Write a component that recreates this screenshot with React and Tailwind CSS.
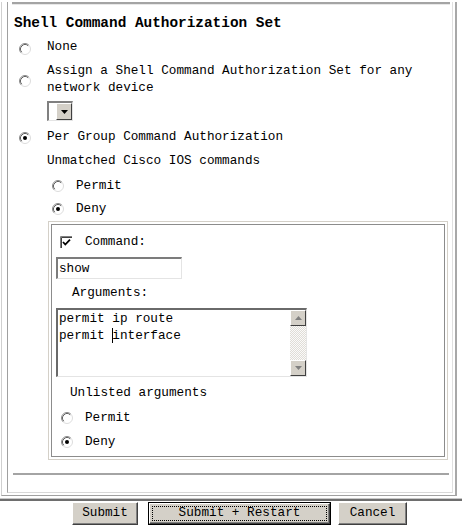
import React from 'react'

const mono = { fontFamily: '"Liberation Mono", "DejaVu Sans Mono", monospace' }

function Radio({ checked }) {
  return (
    <svg width="12" height="12" viewBox="0 0 12 12" className="shrink-0">
      <circle cx="6" cy="6" r="5" fill="#fff" />
      <path d="M2.11 9.89 A5.5 5.5 0 0 1 9.89 2.11" stroke="#8c8c8c" fill="none" />
      <path d="M9.89 2.11 A5.5 5.5 0 0 1 2.11 9.89" stroke="#dcdcdc" fill="none" />
      <path d="M2.82 9.18 A4.5 4.5 0 0 1 9.18 2.82" stroke="#505050" fill="none" strokeWidth="0.9" />
      {checked && <circle cx="6" cy="6" r="2" fill="#000" />}
    </svg>
  )
}

function Checkbox() {
  return (
    <svg width="13" height="13" viewBox="0 0 13 13" className="shrink-0">
      <rect x="0" y="0" width="13" height="13" fill="#fff" />
      <path d="M0.5 13 V0.5 H13" stroke="#808080" fill="none" />
      <path d="M1.5 12 V1.5 H12" stroke="#404040" fill="none" />
      <path d="M12.5 0 V12.5 H0" stroke="#fff" fill="none" />
      <path d="M3 6 L5.3 8.5 L10 3.6" stroke="#000" strokeWidth="1.8" fill="none" />
    </svg>
  )
}

function Row({ h, mt, children, className = '' }) {
  return (
    <div className={`flex items-center ${className}`} style={{ height: h, marginTop: mt }}>
      {children}
    </div>
  )
}

function Button({ children, width, primary }) {
  if (primary) {
    return (
      <div className="h-[23px] border border-black bg-[#d4d0c8] flex" style={{ width }}>
        <div className="flex-1 border-t border-l border-white border-r border-b border-r-[#404040] border-b-[#404040] shadow-[inset_-1px_-1px_#808080] p-[2px] flex">
          <div className="flex-1 border border-dotted border-black flex items-center justify-center text-[12.7px] leading-none">
            {children}
          </div>
        </div>
      </div>
    )
  }
  return (
    <div
      className="h-[23px] bg-[#d4d0c8] border-t border-l border-white border-r border-b border-r-[#404040] border-b-[#404040] shadow-[inset_-1px_-1px_#808080] flex items-center justify-center text-[12.7px] leading-none"
      style={{ width }}
    >
      {children}
    </div>
  )
}

export default function App() {
  return (
    <div className="w-[462px] h-[526px] bg-white text-black overflow-hidden" style={mono}>
      <div className="ml-[1px] w-[456px] h-[494px] border-l border-l-[#d0d0d0] border-r-2 border-r-[#a8a8a8] border-b border-b-[#a0a0a0]">
        <div className="ml-[5px] mr-[2px] h-[491px] border-l border-l-[#a0a0a0] border-r border-r-[#e0e0e0] border-b border-b-[#d8d8d8]">
          <div className="mt-[2px] ml-[4px] mr-[2px] border-t-2 border-t-[#a4a4a4] border-b border-b-[#e8e8e8]" />

          <Row h={20} mt={9} className="pl-[6px]">
            <span className="text-[14.4px] font-bold whitespace-nowrap">Shell Command Authorization Set</span>
          </Row>

          <Row h={24} mt={1} className="pl-[11px] text-[12.7px]">
            <span className="mt-[3px]"><Radio /></span>
            <span className="ml-[16px]">None</span>
          </Row>

          <Row h={34} mt={3} className="pl-[11px] text-[12.7px]">
            <span className="mt-[4px]"><Radio /></span>
            <span className="ml-[16px] leading-[17px]">
              Assign a Shell Command Authorization Set for any
              <br />
              network device
            </span>
          </Row>

          <div className="mt-[5px] ml-[39px] w-[26px] h-[20px] border-t-2 border-l-2 border-t-[#808080] border-l-[#808080] border-r border-b border-r-[#e4e4e4] border-b-[#e4e4e4] bg-white flex justify-end">
            <div className="w-[16px] h-full bg-[#d4d0c8] border-t border-l border-white border-r border-b border-r-[#404040] border-b-[#404040] flex items-center justify-center">
              <svg width="7" height="4" viewBox="0 0 7 4">
                <path d="M0 0 H7 L3.5 4 Z" fill="#000" />
              </svg>
            </div>
          </div>

          <Row h={20} mt={6} className="pl-[11px] text-[12.7px]">
            <span className="mt-[1px]"><Radio checked /></span>
            <span className="ml-[16px]">Per Group Command Authorization</span>
          </Row>

          <Row h={20} mt={4} className="pl-[39px] text-[12.7px]">
            <span>Unmatched Cisco IOS commands</span>
          </Row>

          <Row h={20} mt={5} className="pl-[44px] text-[12.7px]">
            <Radio />
            <span className="ml-[12px]">Permit</span>
          </Row>

          <Row h={20} mt={3} className="pl-[44px] text-[12.7px]">
            <Radio checked />
            <span className="ml-[12px]">Deny</span>
          </Row>

          <div className="mt-[2px] ml-[40px] w-[400px] h-[239px] border border-[#d4d0c8] p-[2px]">
            <div className="h-full border border-[#8c8c8c] text-[12.7px]">
              <Row h={20} mt={7} className="pl-[8px]">
                <Checkbox />
                <span className="ml-[12px]">Command:</span>
              </Row>

              <div className="mt-[5px] ml-[4px] w-[126px] h-[22px] border-t-2 border-l-2 border-t-[#7c7c7c] border-l-[#7c7c7c] border-r border-b border-r-[#e4e4e4] border-b-[#e4e4e4] bg-white flex items-center pl-[1px]">
                show
              </div>

              <Row h={18} mt={5} className="pl-[20px]">
                <span>Arguments:</span>
              </Row>

              <div className="mt-[6px] ml-[4px] w-[251px] h-[69px] border-t-2 border-l-2 border-t-[#6a6a6a] border-l-[#6a6a6a] border-r border-b border-r-[#e4e4e4] border-b-[#e4e4e4] bg-white flex">
                <div className="flex-1 pl-[1px] leading-[17px]">
                  <div>permit ip route</div>
                  <div>
                    permit <span className="inline-block w-0 h-[15px] align-middle border-l border-black -mr-px" />interface
                  </div>
                </div>
                <div className="w-[16px] flex flex-col bg-[repeating-conic-gradient(#e0ddd6_0_25%,#fafafa_0_50%)] bg-[length:2px_2px]">
                  <div className="h-[16px] bg-[#d4d0c8] border-t border-l border-white border-r border-b border-r-[#404040] border-b-[#404040] flex items-center justify-center">
                    <svg width="7" height="4" viewBox="0 0 7 4">
                      <path d="M0 4 H7 L3.5 0 Z" fill="#808080" />
                    </svg>
                  </div>
                  <div className="flex-1" />
                  <div className="h-[16px] bg-[#d4d0c8] border-t border-l border-white border-r border-b border-r-[#404040] border-b-[#404040] flex items-center justify-center">
                    <svg width="7" height="4" viewBox="0 0 7 4">
                      <path d="M0 0 H7 L3.5 4 Z" fill="#808080" />
                    </svg>
                  </div>
                </div>
              </div>

              <Row h={18} mt={7} className="pl-[18px]">
                <span>Unlisted arguments</span>
              </Row>

              <Row h={20} mt={6} className="pl-[9px]">
                <Radio />
                <span className="ml-[12px]">Permit</span>
              </Row>

              <Row h={20} mt={4} className="pl-[9px]">
                <Radio checked />
                <span className="ml-[12px]">Deny</span>
              </Row>
            </div>
          </div>

          <div className="mt-[13px] ml-[5px] w-[436px] border-t-2 border-t-[#a4a4a4]" />
        </div>
      </div>

      <div className="mt-[2px] h-[1px] bg-[#c8c8c8]" />
      <div className="h-[2px] bg-[#6e6e6e]" />

      <div className="mt-[1px] flex pl-[72px]">
        <Button width={66}>Submit</Button>
        <div className="ml-[10px]">
          <Button width={183} primary>Submit + Restart</Button>
        </div>
        <div className="ml-[7px]">
          <Button width={69}>Cancel</Button>
        </div>
      </div>
    </div>
  )
}
